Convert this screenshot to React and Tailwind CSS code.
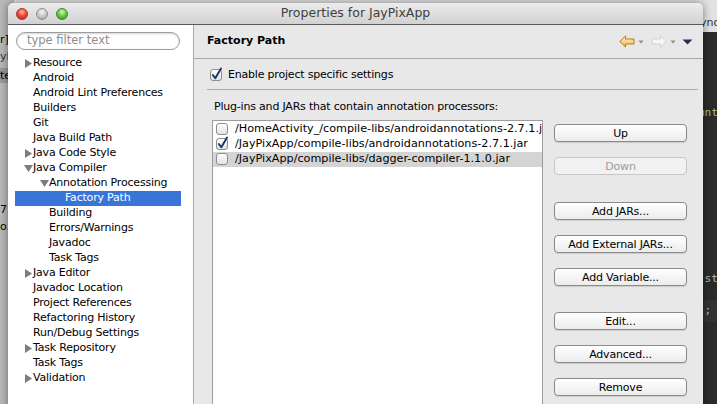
import React from "react";

const tree = [
  { t: "Resource", l: 0, a: "r" },
  { t: "Android", l: 0 },
  { t: "Android Lint Preferences", l: 0 },
  { t: "Builders", l: 0 },
  { t: "Git", l: 0 },
  { t: "Java Build Path", l: 0 },
  { t: "Java Code Style", l: 0, a: "r" },
  { t: "Java Compiler", l: 0, a: "d" },
  { t: "Annotation Processing", l: 1, a: "d" },
  { t: "Factory Path", l: 2, sel: true },
  { t: "Building", l: 1 },
  { t: "Errors/Warnings", l: 1 },
  { t: "Javadoc", l: 1 },
  { t: "Task Tags", l: 1 },
  { t: "Java Editor", l: 0, a: "r" },
  { t: "Javadoc Location", l: 0 },
  { t: "Project References", l: 0 },
  { t: "Refactoring History", l: 0 },
  { t: "Run/Debug Settings", l: 0 },
  { t: "Task Repository", l: 0, a: "r" },
  { t: "Task Tags", l: 0 },
  { t: "Validation", l: 0, a: "r" },
];

const indent = ["pl-[9px]", "pl-[25px]", "pl-[41px]"];

function Arrow({ dir }) {
  if (dir === "r")
    return (
      <svg width="9" height="15" viewBox="0 0 9 15" className="shrink-0">
        <path d="M1 3 L8 7.5 L1 12 Z" fill="#7d7d7d" />
      </svg>
    );
  if (dir === "d")
    return (
      <svg width="9" height="15" viewBox="0 0 9 15" className="shrink-0">
        <path d="M0 4 L9 4 L4.5 11 Z" fill="#7d7d7d" />
      </svg>
    );
  return <span className="w-[9px] shrink-0" />;
}

function CheckBox({ checked }) {
  return (
    <svg width="13" height="13" viewBox="0 0 13 13" className="shrink-0 overflow-visible">
      <defs>
        <linearGradient id="cbg" x1="0" y1="0" x2="0" y2="1">
          <stop offset="0" stopColor="#ffffff" />
          <stop offset="1" stopColor="#e2e2e2" />
        </linearGradient>
      </defs>
      <rect x="0.5" y="0.5" width="11" height="11" rx="2.5" fill="url(#cbg)" stroke="#8d8d8d" />
      {checked && (
        <path d="M2.8 6 L5.3 9.3 L11 -0.5" fill="none" stroke="#1d3566" strokeWidth="1.9" strokeLinecap="round" strokeLinejoin="round" />
      )}
    </svg>
  );
}

function Btn({ children, disabled, className = "" }) {
  return (
    <div
      className={`h-[18px] w-[133px] rounded-[4px] border flex items-center justify-center text-[11px] tracking-[-0.2px] leading-none ${
        disabled
          ? "border-[#c6c6c6] text-[#9c9c9c] bg-[#f1f1f1]"
          : "border-[#8a8a8a] text-black bg-gradient-to-b from-white to-[#ececec] shadow-[0_1px_1px_rgba(0,0,0,0.12)]"
      } ${className}`}
    >
      {children}
    </div>
  );
}

function Lights() {
  return (
    <div className="flex items-center gap-[8px] pl-[8px]">
      <div className="w-[12px] h-[12px] rounded-full border border-[#a33] bg-[radial-gradient(circle_at_50%_30%,#ffb3a6_0%,#f04a3a_45%,#b71f16_100%)]" />
      <div className="w-[12px] h-[12px] rounded-full border border-[#8f8f8f] bg-[radial-gradient(circle_at_50%_30%,#f4f4f4_0%,#c9c9c9_50%,#9a9a9a_100%)]" />
      <div className="w-[12px] h-[12px] rounded-full border border-[#3b8a2a] bg-[radial-gradient(circle_at_50%_30%,#d4f7b5_0%,#6ccf46_45%,#2f8a1c_100%)]" />
    </div>
  );
}

function NavIcons() {
  return (
    <div className="flex items-center">
      <svg width="16" height="13" viewBox="0 0 16 13">
        <defs>
          <linearGradient id="back" x1="0" y1="0" x2="0" y2="1">
            <stop offset="0" stopColor="#fff1c8" />
            <stop offset="1" stopColor="#f1b64a" />
          </linearGradient>
        </defs>
        <path d="M0.8 6.5 L6.5 1 L6.5 4 L15 4 L15 9 L6.5 9 L6.5 12 Z" fill="url(#back)" stroke="#b77a22" strokeLinejoin="round" />
      </svg>
      <svg width="9" height="6" viewBox="0 0 9 6" className="ml-[2px]">
        <path d="M1.5 1.5 L6.5 1.5 L4 4.5 Z" fill="#8c8c8c" />
      </svg>
      <svg width="16" height="13" viewBox="0 0 16 13" className="ml-[5px]">
        <path d="M15.2 6.5 L9.5 1 L9.5 4 L1 4 L1 9 L9.5 9 L9.5 12 Z" fill="#f6f6f6" stroke="#d2d2d2" strokeLinejoin="round" />
      </svg>
      <svg width="9" height="6" viewBox="0 0 9 6" className="ml-[2px]">
        <path d="M1.5 1.5 L6.5 1.5 L4 4.5 Z" fill="#8c8c8c" />
      </svg>
      <svg width="11" height="6" viewBox="0 0 11 6" className="ml-[4px]">
        <path d="M0.5 0.5 L10.5 0.5 L5.5 5.5 Z" fill="#2d2d5c" />
      </svg>
    </div>
  );
}

export default function App() {
  return (
    <div className="relative w-[717px] h-[404px] overflow-hidden bg-[#2b2b2b] font-['DejaVu_Sans',sans-serif] text-black">
      {/* backdrop: eclipse behind the dialog */}
      <div className="absolute left-0 top-0 w-full h-[32px] bg-[#e2e2e2]" />
      <div className="absolute left-0 top-0 w-[14px] h-full bg-[#b9b9b9]" />
      <div className="absolute left-0 top-[68px] w-[14px] h-[15px] bg-[#9a9a9a]" />
      <div className="absolute left-0 top-[34px] text-[11px] leading-none">r]</div>
      <div className="absolute left-0 top-[51px] text-[11px] leading-none text-[#333]">yP</div>
      <div className="absolute left-0 top-[70px] text-[11px] leading-none">te</div>
      <div className="absolute left-0 top-[204px] text-[11px] leading-none">7.</div>
      <div className="absolute left-0 top-[221px] text-[11px] leading-none">o.j</div>
      <div className="absolute left-[700px] top-[17px] text-[11px] leading-none text-[#333]">ynd</div>
      <div className="absolute left-[698px] top-[107px] text-[11px] leading-none text-[#a7c46d] font-['DejaVu_Sans_Mono',monospace]">unt</div>
      <div className="absolute left-[703px] top-[300px] w-[14px] h-[22px] bg-[#333333]" />
      <div className="absolute left-[698px] top-[273px] text-[11px] leading-none text-[#bbbbbb] font-['DejaVu_Sans_Mono',monospace]">.st</div>
      <div className="absolute left-[698px] top-[305px] text-[11px] leading-none text-[#bbbbbb] font-['DejaVu_Sans_Mono',monospace]">);</div>

      {/* dialog window */}
      <div className="absolute left-[8px] top-[3px] w-[695px] h-[420px] rounded-t-[5px] overflow-hidden flex flex-col shadow-[0_0_8px_rgba(0,0,0,0.45)]">
        {/* title bar */}
        <div className="relative h-[22px] shrink-0 flex items-center bg-gradient-to-b from-[#ececec] to-[#d1d1d1] border-b border-[#5a5a5a]">
          <Lights />
          <div className="absolute inset-0 flex items-center justify-center text-[12.5px] text-[#3e3e3e]">
            Properties for JayPixApp
          </div>
        </div>

        {/* body */}
        <div className="flex flex-1 min-h-0">
          {/* sidebar */}
          <div className="w-[186px] shrink-0 bg-white border-r border-[#a9a9a9] flex flex-col">
            <div className="pl-[8px] pt-[7px]">
              <div className="w-[164px] h-[18px] rounded-full border border-[#9d9d9d] shadow-[inset_0_1px_2px_rgba(0,0,0,0.18)] flex items-center pl-[10px] text-[11.5px] text-[#8e8e8e]">
                type filter text
              </div>
            </div>
            <div className="mt-[6px] ml-[7px] w-[166px] flex flex-col">
              {tree.map((it, i) => (
                <div
                  key={i}
                  className={`h-[15px] flex items-center whitespace-nowrap text-[11px] tracking-[-0.2px] ${indent[it.l]} ${
                    it.sel ? "bg-[#3875d7] text-white" : ""
                  }`}
                >
                  <Arrow dir={it.a} />
                  <span>{it.t}</span>
                </div>
              ))}
            </div>
          </div>

          {/* content */}
          <div className="flex-1 bg-[#e8e8e8] flex flex-col">
            <div className="h-[34px] shrink-0 flex items-center justify-between pl-[13px] pr-[10px] border-b border-[#a8a8a8]">
              <span className="text-[11px] font-bold">Factory Path</span>
              <NavIcons />
            </div>
            <div className="mt-[8px] h-[16px] flex items-center pl-[16px] gap-[5px] text-[11px] tracking-[-0.2px]">
              <CheckBox checked />
              <span>Enable project specific settings</span>
            </div>
            <div className="mt-[6px] ml-[13px] mr-[5px] h-px bg-[#acacac]" />
            <div className="flex pl-[18px]">
              <div className="w-[331px] shrink-0 flex flex-col">
                <div className="mt-[10px] h-[15px] flex items-center pl-[2px] text-[11px] tracking-[-0.2px] whitespace-nowrap">
                  Plug-ins and JARs that contain annotation processors:
                </div>
                <div className="mt-[5px] h-[300px] bg-white border border-[#9c9c9c] pt-[1px] overflow-hidden">
                  {[
                    ["/HomeActivity_/compile-libs/androidannotations-2.7.1.jar", false, false],
                    ["/JayPixApp/compile-libs/androidannotations-2.7.1.jar", true, false],
                    ["/JayPixApp/compile-libs/dagger-compiler-1.1.0.jar", false, true],
                  ].map(([t, c, s], i) => (
                    <div
                      key={i}
                      className={`h-[15px] flex items-center pl-[3px] gap-[6px] whitespace-nowrap text-[11.2px] ${s ? "bg-[#d4d4d4]" : ""}`}
                    >
                      <CheckBox checked={c} />
                      <span>{t}</span>
                    </div>
                  ))}
                </div>
              </div>
              <div className="ml-[11px] pt-[34px] flex flex-col">
                <Btn>Up</Btn>
                <Btn disabled className="mt-[15px]">Down</Btn>
                <Btn className="mt-[27px]">Add JARs...</Btn>
                <Btn className="mt-[15px]">Add External JARs...</Btn>
                <Btn className="mt-[15px]">Add Variable...</Btn>
                <Btn className="mt-[26px]">Edit...</Btn>
                <Btn className="mt-[15px]">Advanced...</Btn>
                <Btn className="mt-[15px]">Remove</Btn>
              </div>
            </div>
          </div>
        </div>
      </div>
    </div>
  );
}
